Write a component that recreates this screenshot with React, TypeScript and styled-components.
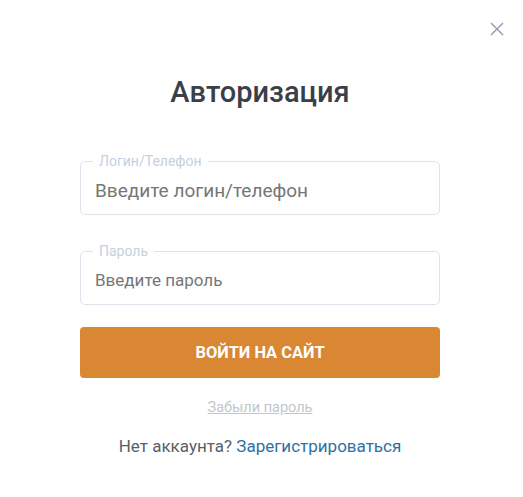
import styled, { createGlobalStyle } from 'styled-components';

const GlobalStyle = createGlobalStyle`
  html, body {
    margin: 0;
    padding: 0;
    background: #ffffff;
  }
  body {
    font-family: Roboto, "Noto Sans", "Liberation Sans", sans-serif;
  }
`;

const Modal = styled.div`
  position: relative;
  width: 523px;
  height: 497px;
  background: #ffffff;
  box-sizing: border-box;
  padding: 75px 0 0 80px;
`;

const CloseButton = styled.button`
  position: absolute;
  top: 22px;
  right: 19px;
  width: 14px;
  height: 14px;
  padding: 0;
  border: none;
  background: none;
  cursor: pointer;
  svg {
    display: block;
  }
`;

const Form = styled.form`
  width: 360px;
  display: flex;
  flex-direction: column;
`;

const Title = styled.h2`
  margin: 0 0 44px;
  font-size: 29px;
  line-height: 35px;
  font-weight: 500;
  color: #3b4048;
  text-align: center;
`;

const Field = styled.fieldset<{ gapAfter: number }>`
  margin: 0 0 ${(p) => p.gapAfter}px;
  padding: 0 14px 0 14px;
  border: 1px solid #dde3ec;
  border-radius: 5px;
  min-width: 0;
`;

const Legend = styled.legend`
  margin-left: -2px;
  padding: 0 6px;
  font-size: 14px;
  line-height: 14px;
  color: #c3d0e0;
`;

const Input = styled.input<{ big?: boolean }>`
  display: block;
  box-sizing: border-box;
  width: 100%;
  height: 46px;
  margin: 0;
  padding: 0 0 2px;
  border: none;
  outline: none;
  background: transparent;
  font-family: inherit;
  font-size: ${(p) => (p.big ? 19 : 17)}px;
  color: #333;
  caret-color: #333;
  &::placeholder {
    color: #767676;
  }
`;

const Submit = styled.button`
  height: 51px;
  border: none;
  border-radius: 4px;
  background: #d98733;
  color: #ffffff;
  font-family: inherit;
  font-size: 16.4px;
  font-weight: 700;
  cursor: pointer;
`;

const Forgot = styled.a`
  margin-top: 22px;
  align-self: center;
  font-size: 14.5px;
  line-height: 16px;
  color: #c2c6cd;
  text-decoration: underline;
  cursor: pointer;
`;

const Register = styled.p`
  margin: 20px 0 0;
  text-align: center;
  font-size: 17px;
  line-height: 20px;
  color: #5a5f66;
  a {
    color: #2f6fa3;
    text-decoration: none;
  }
`;

function App(): JSX.Element {
  return (
    <>
      <GlobalStyle />
      <Modal>
        <CloseButton type="button" aria-label="Закрыть">
          <svg width="14" height="14" viewBox="0 0 14 14">
            <path d="M1 1L13 13M13 1L1 13" stroke="#9aa3b4" strokeWidth="1.6" />
          </svg>
        </CloseButton>
        <Form onSubmit={(e) => e.preventDefault()}>
          <Title>Авторизация</Title>
          <Field gapAfter={29}>
            <Legend>Логин/Телефон</Legend>
            <Input big placeholder="Введите логин/телефон" autoFocus />
          </Field>
          <Field gapAfter={22}>
            <Legend>Пароль</Legend>
            <Input type="password" placeholder="Введите пароль" />
          </Field>
          <Submit type="submit">ВОЙТИ НА САЙТ</Submit>
          <Forgot>Забыли пароль</Forgot>
          <Register>
            Нет аккаунта? <a href="#register">Зарегистрироваться</a>
          </Register>
        </Form>
      </Modal>
    </>
  );
}

export default App;
